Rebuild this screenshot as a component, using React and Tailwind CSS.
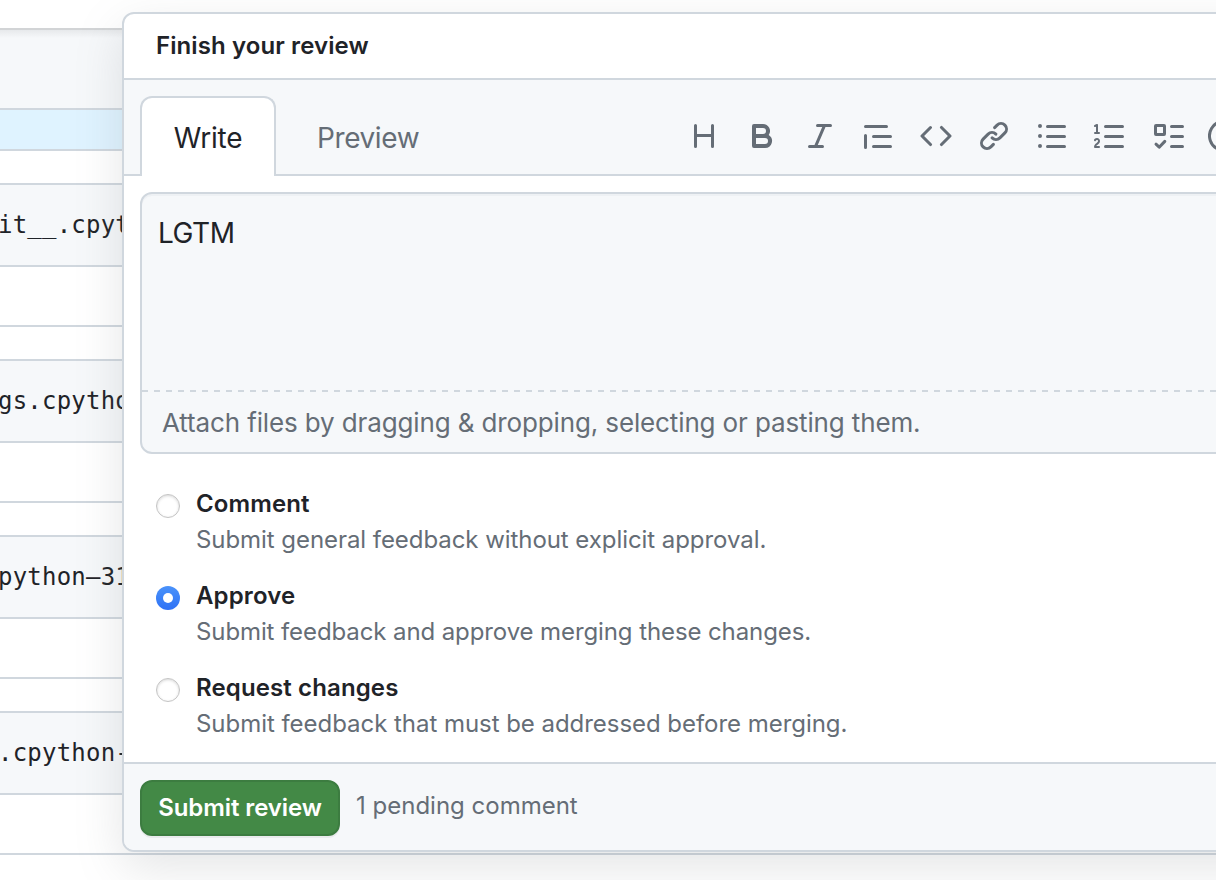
const ICONS = [
  "M3.75 2a.75.75 0 01.75.75V7h7V2.75a.75.75 0 011.5 0v10.5a.75.75 0 01-1.5 0V8.5h-7v4.75a.75.75 0 01-1.5 0V2.75A.75.75 0 013.75 2z",
  "M4 2a1 1 0 00-1 1v10a1 1 0 001 1h5.5a3.5 3.5 0 001.852-6.47A3.5 3.5 0 008.5 2H4zm4.5 5a1.5 1.5 0 100-3H5v3h3.5zM5 9v3h4.5a1.5 1.5 0 000-3H5z",
  "M6 2.75A.75.75 0 016.75 2h6.5a.75.75 0 010 1.5h-2.505l-3.858 9H9.25a.75.75 0 010 1.5h-6.5a.75.75 0 010-1.5h2.505l3.858-9H6.75A.75.75 0 016 2.75z",
  "M1.75 2.5a.75.75 0 000 1.5h10.5a.75.75 0 000-1.5H1.75zm4 5a.75.75 0 000 1.5h8.5a.75.75 0 000-1.5h-8.5zm0 5a.75.75 0 000 1.5h8.5a.75.75 0 000-1.5h-8.5zM2.5 7.75a.75.75 0 00-1.5 0v6a.75.75 0 001.5 0v-6z",
  "M4.72 3.22a.75.75 0 011.06 1.06L2.06 8l3.72 3.72a.75.75 0 11-1.06 1.06L.47 8.53a.75.75 0 010-1.06l4.25-4.25zm6.56 0a.75.75 0 10-1.06 1.06L13.94 8l-3.72 3.72a.75.75 0 101.06 1.06l4.25-4.25a.75.75 0 000-1.06l-4.25-4.25z",
  "M7.775 3.275a.75.75 0 001.06 1.06l1.25-1.25a2 2 0 112.83 2.83l-2.5 2.5a2 2 0 01-2.83 0 .75.75 0 00-1.06 1.06 3.5 3.5 0 004.95 0l2.5-2.5a3.5 3.5 0 00-4.95-4.95l-1.25 1.25zm-4.69 9.64a2 2 0 010-2.83l2.5-2.5a2 2 0 012.83 0 .75.75 0 001.06-1.06 3.5 3.5 0 00-4.95 0l-2.5 2.5a3.5 3.5 0 004.95 4.95l1.25-1.25a.75.75 0 00-1.06-1.06l-1.25 1.25a2 2 0 01-2.83 0z",
  "M2 4a1 1 0 100-2 1 1 0 000 2zm3.75-1.5a.75.75 0 000 1.5h8.5a.75.75 0 000-1.5h-8.5zm0 5a.75.75 0 000 1.5h8.5a.75.75 0 000-1.5h-8.5zm0 5a.75.75 0 000 1.5h8.5a.75.75 0 000-1.5h-8.5zM3 8a1 1 0 11-2 0 1 1 0 012 0zm-1 6a1 1 0 100-2 1 1 0 000 2z",
  "M2.003 2.5a.5.5 0 00-.723-.447l-1.003.5a.5.5 0 00.446.895l.28-.14V6H.5a.5.5 0 000 1h2.006a.5.5 0 100-1h-.503V2.5zM5 3.25a.75.75 0 01.75-.75h8.5a.75.75 0 010 1.5h-8.5A.75.75 0 015 3.25zm0 5a.75.75 0 01.75-.75h8.5a.75.75 0 010 1.5h-8.5A.75.75 0 015 8.25zm0 5a.75.75 0 01.75-.75h8.5a.75.75 0 010 1.5h-8.5a.75.75 0 01-.75-.75zM.924 10.32l.003-.004a.851.851 0 01.144-.153A.66.66 0 011.5 10c.195 0 .306.068.374.146a.57.57 0 01.128.376c0 .453-.269.682-.8 1.078l-.035.025C.692 11.98 0 12.495 0 13.5a.5.5 0 00.5.5h2.003a.5.5 0 000-1H1.146c.132-.197.351-.372.654-.597l.047-.035c.47-.35 1.156-.858 1.156-1.845 0-.365-.118-.744-.377-1.038-.268-.303-.658-.484-1.126-.484-.48 0-.84.202-1.068.392a1.858 1.858 0 00-.348.384l-.007.011-.002.004-.001.002-.001.001a.5.5 0 00.851.525z",
];

const FILES = ["it__.cpyt", "gs.cpytho", "python–31", ".cpython-"];

const OPTIONS = [
  { title: "Comment", text: "Submit general feedback without explicit approval.", spacing: "tracking-[-0.06px]" },
  { title: "Approve", text: "Submit feedback and approve merging these changes.", spacing: "tracking-[-0.1px]", checked: true },
  { title: "Request changes", text: "Submit feedback that must be addressed before merging.", spacing: "tracking-[-0.04px]" },
];

function Toolbar() {
  return (
    <div className="flex gap-[26px] pt-6 text-[#656d76]">
      {ICONS.map((d) => (
        <svg key={d} viewBox="0 0 16 16" className="size-8 shrink-0" fill="currentColor" fillRule="evenodd">
          <path d={d} />
        </svg>
      ))}
      <svg viewBox="0 0 16 16" className="size-8 shrink-0" fill="none" stroke="currentColor" strokeWidth="1.5" strokeLinecap="round" strokeLinejoin="round">
        <rect x="1.75" y="2.75" width="4.5" height="4.5" rx="0.25" />
        <path d="M9.75 3.25h5.5M9.75 8.25h5.5M9.75 13.25h5.5" />
        <path d="M2 12.1l1.6 1.5 2.8-2.9" strokeWidth="1.5" />
      </svg>
      <svg viewBox="0 0 16 16" className="-ml-0.5 size-8 shrink-0" fill="none" stroke="currentColor" strokeWidth="1.5" strokeLinecap="round">
        <path d="M11.6 14.2A7.25 7.25 0 1 1 15.25 8v1.1a2 2 0 0 1-4 0V5" />
        <circle cx="8" cy="8" r="3.25" />
      </svg>
    </div>
  );
}

function Radio({ checked }) {
  return checked ? (
    <span className="mt-0.5 flex size-6 shrink-0 items-center justify-center rounded-full bg-linear-to-b from-[#4a92fa] to-[#2f71f5]">
      <span className="size-[10px] rounded-full bg-white" />
    </span>
  ) : (
    <span className="mt-0.5 size-6 shrink-0 rounded-full border border-[#c4c4c4] bg-white shadow-[inset_0_1px_3px_rgba(0,0,0,0.16)]" />
  );
}

export default function App() {
  return (
    <div className="relative h-[880px] w-[1216px] overflow-hidden bg-white font-['Inter',sans-serif] text-[#1f2328]">
      <div className="h-[30px] border-b-2 border-[#d2d4d6]" />
      <div className="h-[78px] bg-[#f6f8fa] bg-[linear-gradient(rgba(31,35,40,0.07),transparent_8px)]" />
      <div className="h-[43px] border-y-2 border-[#d0d7de] bg-[#dff3ff]" />
      <div className="flex flex-col gap-8 pt-8">
        {FILES.map((name) => (
          <div key={name} className="h-36 border-y-2 border-[#d0d7de]">
            <div className="flex h-[82px] items-center border-b-2 border-[#d0d7de] bg-[#f6f8fa]">
              <span className="-ml-0.5 w-[124px] overflow-hidden whitespace-pre font-['DejaVu_Sans_Mono',monospace] text-2xl tracking-[0.22px]">{name}</span>
            </div>
          </div>
        ))}
      </div>

      <section className="absolute left-[122px] top-3 flex h-[840px] w-[1200px] flex-col overflow-hidden rounded-xl border-2 border-[#d0d7de] bg-white shadow-[0_16px_48px_rgba(120,126,130,0.2)]">
        <header className="flex h-[66px] shrink-0 items-center border-b-2 border-[#d0d7de] pl-8">
          <h1 className="whitespace-nowrap text-2xl font-semibold tracking-[0.1px]">Finish your review</h1>
        </header>
        <div className="flex h-24 shrink-0 bg-[#f6f8fa]">
          <div className="w-4 border-b-2 border-[#d0d7de]" />
          <div className="mt-4 flex w-[136px] items-center justify-center rounded-t-xl border-2 border-b-0 border-[#d0d7de] bg-white pt-0.5 text-[28px] tracking-[-0.2px]">Write</div>
          <div className="flex flex-1 border-b-2 border-[#d0d7de]">
            <div className="flex w-[412px] shrink-0 items-center pl-[41px] pt-[22px] text-[28px] tracking-[-0.4px] text-[#656d76]">Preview</div>
            <div className="pt-4"><Toolbar /></div>
          </div>
        </div>
        <div className="ml-4 mt-4 flex h-[262px] shrink-0 flex-col rounded-l-xl border-2 border-[#d0d7de] bg-[#f6f8fa] shadow-[inset_0_2px_0_rgba(208,215,222,0.2)]">
          <div className="h-[196px] pl-4 pt-[18px] text-[28px] leading-[42px] tracking-[-0.5px]">LGTM</div>
          <div className="h-0.5 bg-[repeating-linear-gradient(90deg,#d0d7de_0_6px,transparent_6px_12px)]" />
          <div className="flex flex-1 items-center whitespace-nowrap pl-5 pt-px text-[26px] tracking-[-0.13px] text-[#656d76]">Attach files by dragging &amp; dropping, selecting or pasting them.</div>
        </div>
        <div className="flex flex-1 flex-col gap-5 pl-8 pt-[38px]">
          {OPTIONS.map((o) => (
            <div key={o.title} className="flex h-[72px] gap-4">
              <Radio checked={o.checked} />
              <div className="-mt-1.5 whitespace-nowrap text-2xl leading-9">
                <div className="font-semibold tracking-[0.12px]">{o.title}</div>
                <div className={"text-[#656d76] " + o.spacing}>{o.text}</div>
              </div>
            </div>
          ))}
        </div>
        <footer className="flex h-[88px] shrink-0 items-start gap-4 border-t-2 border-[#d0d7de] bg-[#f6f8fa] pl-4 pt-4">
          <button className="h-14 w-[200px] whitespace-nowrap rounded-xl border-2 border-[#3c7c40] bg-[#438946] text-2xl font-semibold tracking-[-0.1px] text-white shadow-[0_2px_0_rgba(31,35,40,0.06)]">Submit review</button>
          <span className="pt-2 text-2xl leading-9 text-[#656d76]">1 pending comment</span>
        </footer>
      </section>
    </div>
  );
}
